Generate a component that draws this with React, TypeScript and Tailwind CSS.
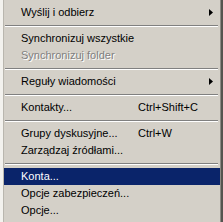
const font = { fontFamily: '"Liberation Sans", Arial, sans-serif' };

type Item =
  | { kind: "sep" }
  | { kind: "item"; label: string; shortcut?: string; submenu?: boolean; disabled?: boolean; active?: boolean };

const items: Item[] = [
  { kind: "item", label: "Wyślij i odbierz", submenu: true },
  { kind: "sep" },
  { kind: "item", label: "Synchronizuj wszystkie" },
  { kind: "item", label: "Synchronizuj folder", disabled: true },
  { kind: "sep" },
  { kind: "item", label: "Reguły wiadomości", submenu: true },
  { kind: "sep" },
  { kind: "item", label: "Kontakty...", shortcut: "Ctrl+Shift+C" },
  { kind: "sep" },
  { kind: "item", label: "Grupy dyskusyjne...", shortcut: "Ctrl+W" },
  { kind: "item", label: "Zarządzaj źródłami..." },
  { kind: "sep" },
  { kind: "item", label: "Konta...", active: true },
  { kind: "item", label: "Opcje zabezpieczeń..." },
  { kind: "item", label: "Opcje..." },
];

function Arrow({ color }: { color: string }) {
  return (
    <svg width="4" height="7" viewBox="0 0 4 7" className="block">
      <path d="M0 0 L4 3.5 L0 7 Z" fill={color} />
    </svg>
  );
}

export default function App() {
  return (
    <div className="flex h-[222px] w-[223px] bg-[#d4d0c8] text-[11px] leading-none text-black" style={font}>
      <div className="flex w-[4px] shrink-0">
        <div className="w-[3px] bg-[#f3f2ee]" />
        <div className="w-[1px] bg-[#b9b6ae]" />
      </div>
      <div className="flex flex-1 flex-col pt-[4px]">
        {items.map((it, i) =>
          it.kind === "sep" ? (
            <div key={i} className="flex h-[9px] flex-col justify-center pl-[1px] pr-[2px]">
              <div className="h-[1px] bg-[#808080]" />
              <div className="h-[1px] bg-white" />
            </div>
          ) : (
            <div
              key={i}
              className={
                "flex h-[17px] items-center pl-[17px] pr-[7px] " +
                (it.active ? "bg-[#0a246a] text-white" : "")
              }
            >
              <span
                className={"w-[117px] shrink-0 whitespace-nowrap " + (it.disabled ? "text-[#808080] [text-shadow:1px_1px_0_#ffffff]" : "")}
              >
                {it.label}
              </span>
              {it.shortcut && <span className="whitespace-nowrap">{it.shortcut}</span>}
              {it.submenu && (
                <span className="ml-auto">
                  <Arrow color={it.active ? "#ffffff" : "#000000"} />
                </span>
              )}
            </div>
          )
        )}
      </div>
      <div className="flex w-[3px] shrink-0">
        <div className="w-[1px] bg-[#8c8a84]" />
        <div className="w-[2px] bg-[#55544f]" />
      </div>
    </div>
  );
}
